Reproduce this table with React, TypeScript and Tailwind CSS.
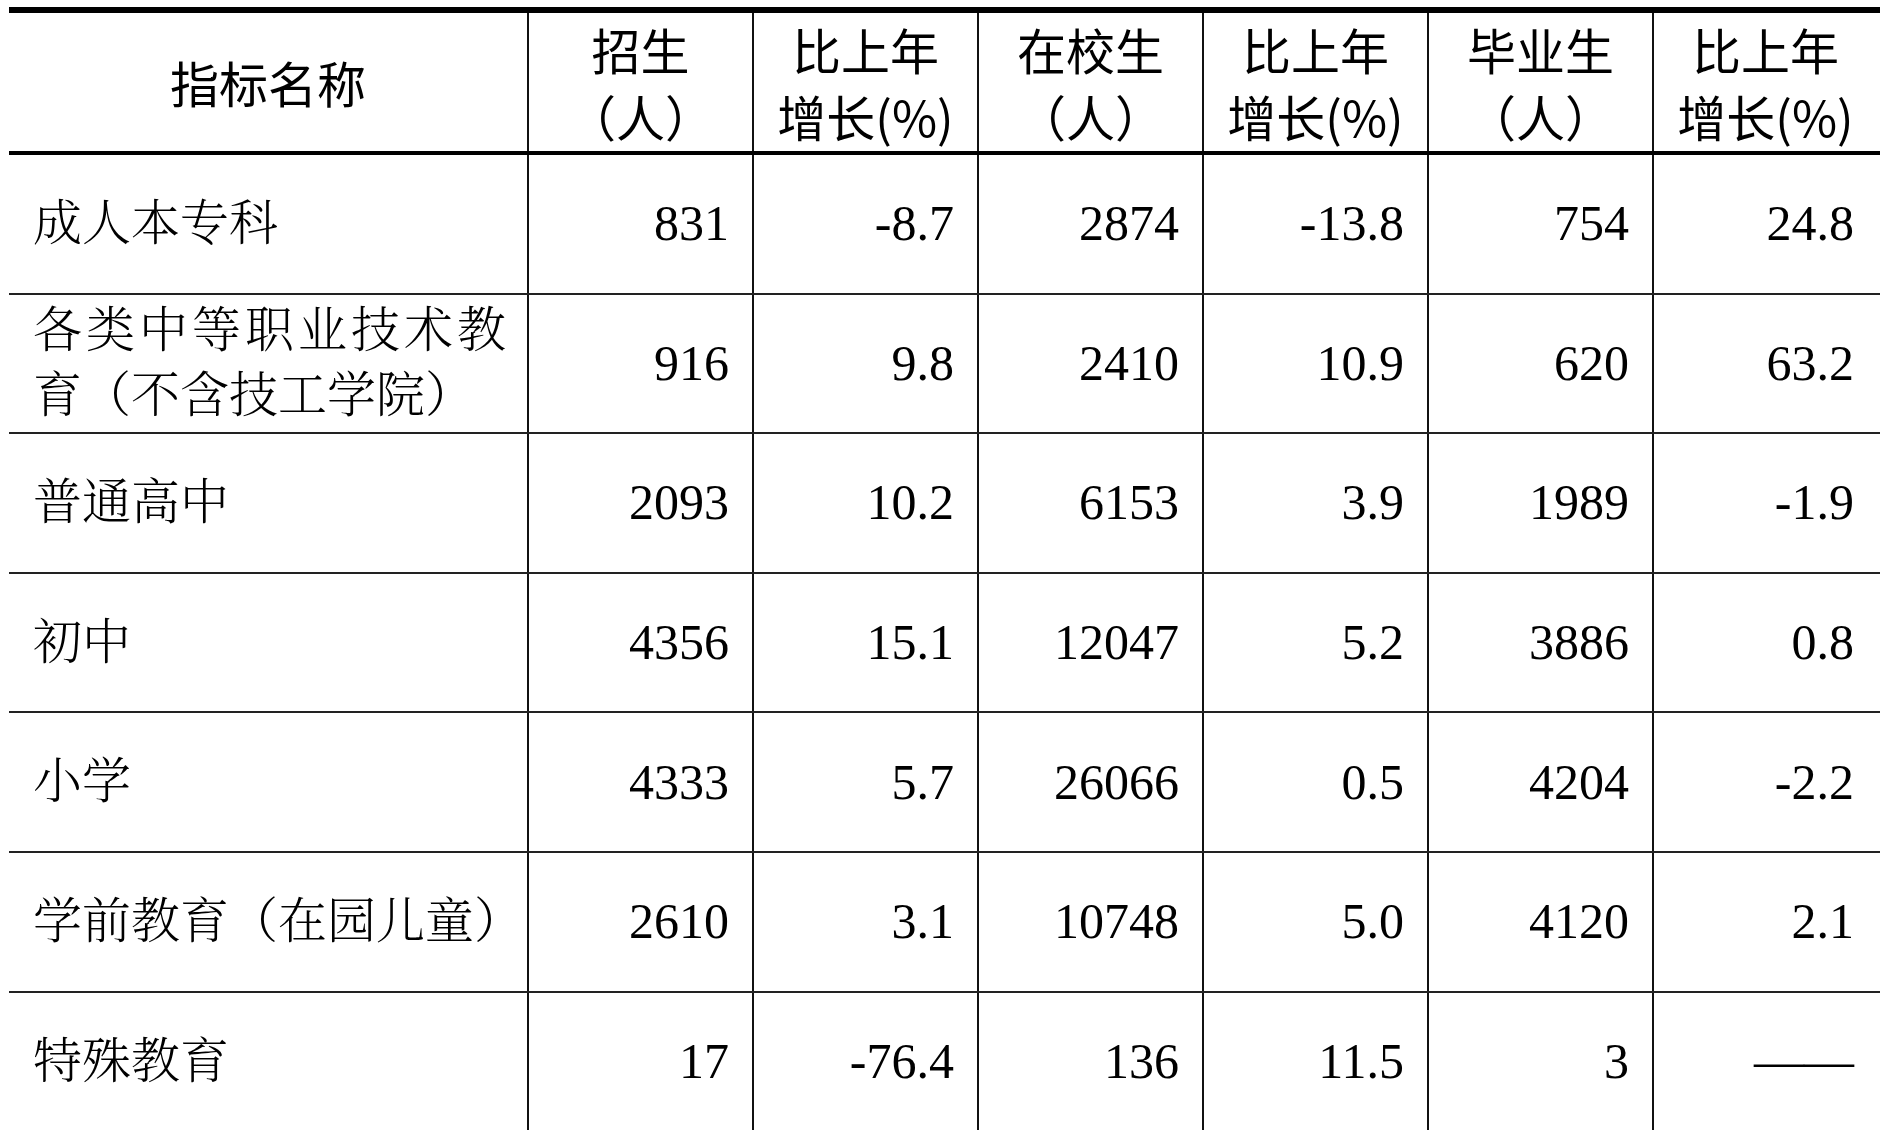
const cols = "grid grid-cols-[518px_225px_225px_225px_225px_225px_225px]";

const headers: [string, string][] = [
  ["招生", "（人）"],
  ["比上年", "增长(%)"],
  ["在校生", "（人）"],
  ["比上年", "增长(%)"],
  ["毕业生", "（人）"],
  ["比上年", "增长(%)"],
];

type Row = { name: string | [string, string]; values: string[] };

const rows: Row[] = [
  { name: "成人本专科", values: ["831", "-8.7", "2874", "-13.8", "754", "24.8"] },
  {
    name: ["各类中等职业技术教", "育（不含技工学院）"],
    values: ["916", "9.8", "2410", "10.9", "620", "63.2"],
  },
  { name: "普通高中", values: ["2093", "10.2", "6153", "3.9", "1989", "-1.9"] },
  { name: "初中", values: ["4356", "15.1", "12047", "5.2", "3886", "0.8"] },
  { name: "小学", values: ["4333", "5.7", "26066", "0.5", "4204", "-2.2"] },
  { name: "学前教育（在园儿童）", values: ["2610", "3.1", "10748", "5.0", "4120", "2.1"] },
  { name: "特殊教育", values: ["17", "-76.4", "136", "11.5", "3", "——"] },
];

function NameCell({ name }: { name: Row["name"] }) {
  return (
    <div className="flex items-center pl-[24px] whitespace-nowrap font-['Liberation_Serif','Noto_Serif_CJK_SC','Noto_Sans_CJK_SC',serif] text-[49px] font-light">
      {typeof name === "string" ? (
        <span>{name}</span>
      ) : (
        <div className="flex flex-col leading-[65px]">
          <div className="w-[473px] [text-align-last:justify]">{name[0]}</div>
          <div>{name[1]}</div>
        </div>
      )}
    </div>
  );
}

export default function App() {
  return (
    <div className="w-[1880px] h-[1130px] overflow-hidden bg-white text-black pt-[7px] pl-[9px]">
      <div className="w-[1871px] border-t-[6px] border-black">
        {/* header */}
        <div className={`${cols} h-[142px] border-b-4 border-black font-['Noto_Sans_CJK_SC',sans-serif] font-normal text-[49px]`}>
          <div className="flex items-center justify-center">指标名称</div>
          {headers.map(([a, b], i) => (
            <div
              key={i}
              className="flex flex-col items-center justify-center border-l-2 border-[#111] leading-[67px] whitespace-nowrap"
            >
              <span>{a}</span>
              <span>{b}</span>
            </div>
          ))}
        </div>

        {rows.map((row, i) => (
          <div key={i} className={`${cols} h-[139.6px] border-b-2 border-[#222]`}>
            <NameCell name={row.name} />
            {row.values.map((v, j) => (
              <div
                key={j}
                className="flex items-center justify-end pr-[23px] border-l-2 border-[#111] font-['Liberation_Serif',serif] text-[50px]"
              >
                {v}
              </div>
            ))}
          </div>
        ))}
      </div>
    </div>
  );
}
